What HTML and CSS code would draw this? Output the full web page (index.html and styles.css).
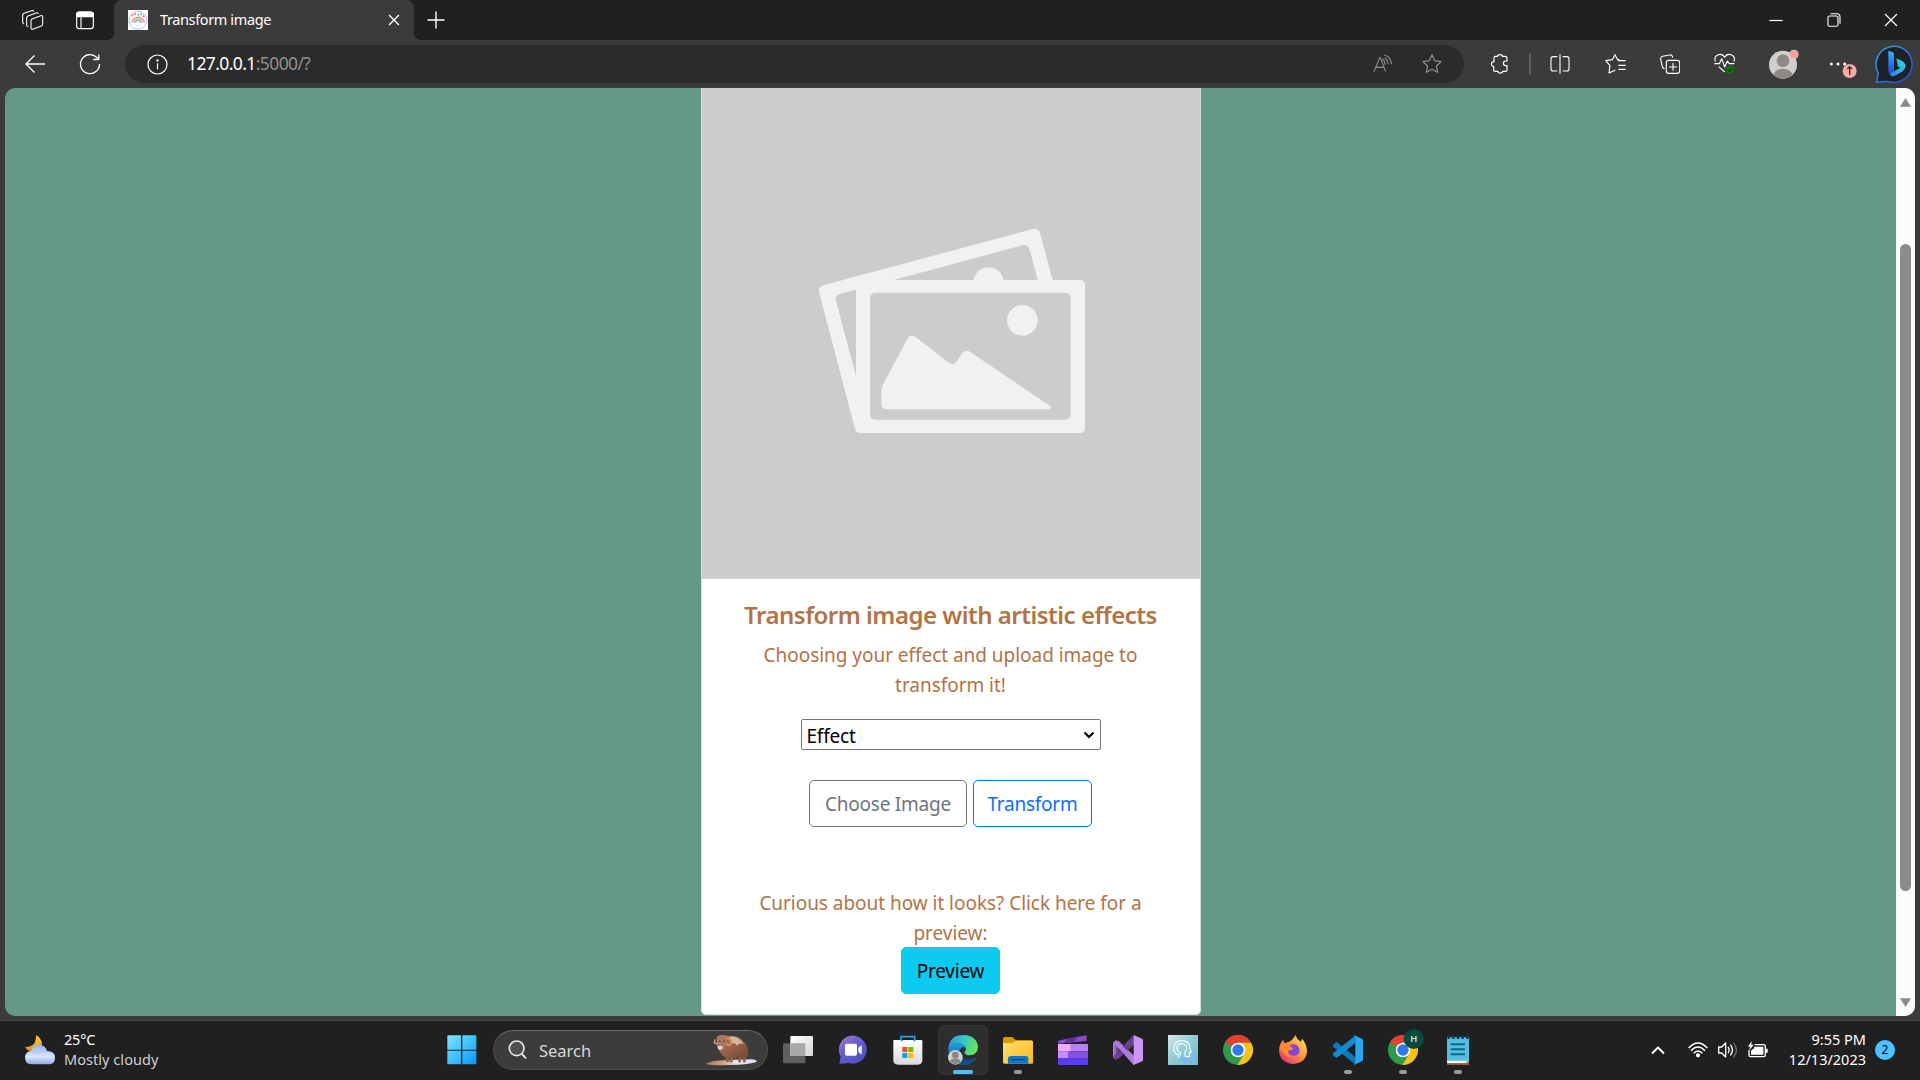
FILE: index.html
```html
<!DOCTYPE html>
<html lang="en">
<head>
<meta charset="utf-8">
<title>Transform image</title>
<link rel="stylesheet" href="styles.css">
</head>
<body>
<div class="desktop">
  <header class="tabstrip">
    <div class="strip-left">
      <svg class="ic over" width="21" height="20" viewBox="0 0 63 60" stroke-width="3.2"><path d="M30 27L56 17Q62 15 62 21V42Q62 46 58 48L34 57Q27 59 27 53V32Q27 28 30 27zM19 50Q14 49 14 44V24Q14 20 18 18L42 9Q48 7 49 12M6 42Q2 40 2 36V16Q2 12 6 10L28 2Q34 0 35 5"/></svg>
      <svg class="ic" width="20" height="20" viewBox="0 0 60 60" stroke-width="3.4"><rect x="5" y="6" width="50" height="50" rx="8"/><path d="M5 20V13q0-7 8-7h34q8 0 8 7v7z" fill="#fff"/><path d="M18 20v36"/></svg>
    </div>
    <div class="tab">
      <svg width="20" height="20" viewBox="0 0 60 60"><rect width="60" height="60" fill="#fff"/><circle cx="30" cy="31" r="27" fill="none" stroke="#9eacf3" stroke-width="2.5"/><g fill="none" stroke-width="3.500"><path d="M11 38a19 16 0 0 1 38 0" stroke="#f47a6d"/><path d="M15 38a15 12.500 0 0 1 30 0" stroke="#f8cf8c"/><path d="M19 38a11 9 0 0 1 22 0" stroke="#73c7a0"/><path d="M23 38a7 6 0 0 1 14 0" stroke="#8fb4f0"/><path d="M11 19l5-5" stroke="#f4a33d" stroke-width="5"/><path d="M19 13l5-2" stroke="#ef5b55" stroke-width="5"/><path d="M28 14h5" stroke="#3fb5c6" stroke-width="5"/><path d="M37 12l5 2" stroke="#5cba66" stroke-width="5"/><path d="M45 17l4 4" stroke="#ef5b55" stroke-width="5"/><path d="M22 46h16" stroke="#cfd6f5" stroke-width="2"/></g></svg>
      <span class="tab-title">Transform image</span>
      <svg class="ic" width="12" height="12" viewBox="0 0 12 12" stroke-width="1.4"><path d="M1 1l10 10M11 1L1 11"/></svg>
    </div>
    <svg class="ic newtab" width="18" height="18" viewBox="0 0 18 18" stroke-width="1.4"><path d="M9 .5v17M.5 9h17"/></svg>
    <div class="win-buttons">
      <svg class="ic" width="14" height="14" viewBox="0 0 14 14" stroke-width="1.2"><path d="M.5 7.500h13"/></svg>
      <svg class="ic" width="14" height="14" viewBox="0 0 14 14" stroke-width="1.1"><rect x="1" y="3" width="10" height="10.300" rx="1.500"/><path d="M3.500.8H10q3 0 3 3v7"/></svg>
      <svg class="ic" width="14" height="14" viewBox="0 0 14 14" stroke-width="1.2"><path d="M1 1l12 12M13 1L1 13"/></svg>
    </div>
  </header>

  <nav class="toolbar">
    <div class="nav-buttons">
      <svg class="ic" width="22" height="20" viewBox="0 0 22 20" stroke-width="1.3"><path d="M10.500 1.500L2 10l8.500 8.500M2 10h19"/></svg>
      <svg class="ic" width="22" height="22" viewBox="0 0 22 22" stroke-width="1.300"><path d="M20.500 11A9.500 9.500 0 1 1 17.600 4.300L19.500 6M19.800 1.500v5h-5.500"/></svg>
    </div>
    <div class="address">
      <svg class="ic" width="21" height="21" viewBox="0 0 21 21" stroke-width="1.2"><circle cx="10.500" cy="10.500" r="9.500"/><path d="M10.500 9.300v6"/><circle cx="10.500" cy="6.500" r=".6" fill="#fff"/></svg>
      <span class="url">127.0.0.1<span class="url-dim">:5000/?</span></span>
      <svg class="ic dim" width="20" height="20" viewBox="0 0 60 60" stroke-width="3.300"><path d="M3 53L20 11h2l16 42M9 40h23M35 12q10 5 10 19M34 3q20 5 21 27M27 15q8 3 9 17" /></svg>
      <svg class="ic dim" width="20" height="20" viewBox="0 0 20 20" stroke-width="1.200"><path d="M10 .9l2.800 5.800 6.300.9-4.600 4.400 1.100 6.300L10 15.300l-5.600 3 1.100-6.300L.9 7.600l6.300-.9z"/></svg>
    </div>
    <div class="tools">
      <svg class="ic" width="20" height="20" viewBox="0 0 60 60" stroke-width="3.500"><path d="M12 11q0-4 4-4h7c0-7 14-7 14 0h8q6 0 6 5v9h-4c-9 0-9 14 0 14h4v12q0 5-5 5h-8c0 7-14 7-14 0h-8q-5 0-5-4V37C2 37 2 23 12 23z"/></svg>
      <span class="divider"></span>
      <svg class="ic" width="20" height="20" viewBox="0 0 60 60" stroke-width="3.300"><path d="M22 8H10q-7 0-7 7v29q0 7 7 7h12M38 8h12q7 0 7 7v29q0 7-7 7H38M30 1v58"/></svg>
      <svg class="ic" width="21" height="20" viewBox="0 0 63 60" stroke-width="3.500"><path d="M43 17l-5 0-8-15-8 15-20 3 13 15-3 22 15-7 4-2M39 20h23M40 34h22M40 46h22"/></svg>
      <svg class="ic" width="20" height="20" viewBox="0 0 60 60" stroke-width="3.300"><rect x="19" y="19" width="40" height="39" rx="7"/><path d="M39 27v23M27 39h24M38 11q-1-10-9-8L8 7Q1 9 2 16l5 22q1 5 7 6"/></svg>
      <svg class="ic over" width="22" height="22" viewBox="0 0 66 66" stroke-width="3.400"><path d="M4 26C-3 4 24-3 32 13 40-3 67 4 60 26M1 32h15l7-15 9 25 8-18 6 8h15M14 41l18 16"/><circle cx="48" cy="50" r="13" fill="#12700f" stroke="none"/><path d="M42 51l4 4 8-9" stroke="#063b05"/></svg>
      <svg width="32" height="32" viewBox="0 0 96 96"><defs><clipPath id="av"><circle cx="45" cy="50" r="42"/></clipPath></defs><circle cx="45" cy="50" r="42" fill="#d1cfcc"/><g clip-path="url(#av)" fill="#8c8986"><circle cx="45" cy="38" r="19"/><ellipse cx="45" cy="83" rx="29" ry="21"/></g><circle cx="78" cy="19" r="14" fill="#d1cfcc"/><circle cx="78" cy="19" r="11.500" fill="#fa9e98"/></svg>
      <svg width="28" height="28" viewBox="0 0 84 84"><g fill="#fff"><circle cx="7" cy="42" r="4.500"/><circle cx="27" cy="42" r="4.500"/><circle cx="47" cy="42" r="4.500"/></g><circle cx="62" cy="63" r="21" fill="#f7aaa5"/><path d="M62 75V51M55 57l7-7 7 7" stroke="#333" stroke-width="4" fill="none"/></svg>
      <svg width="40" height="40" viewBox="0 0 120 120"><defs><linearGradient id="bg1" x1="0" x2="1" y1="0" y2="1"><stop stop-color="#27b5ee"/><stop offset=".5" stop-color="#2b74ee"/><stop offset="1" stop-color="#1d4fd0"/></linearGradient><linearGradient id="bg2" x1="0" x2="0" y1="0" y2="1"><stop stop-color="#3ab4fb"/><stop offset="1" stop-color="#1c4bd8"/></linearGradient><linearGradient id="bg3" x1="1" x2="0" y1="0" y2="1"><stop stop-color="#2ce6d6"/><stop offset="1" stop-color="#2f7bf2"/></linearGradient></defs><path d="M5 115L10 87A54 54 0 1 1 43 113Q28 111 5 115z" fill="#1e2228" stroke="url(#bg1)" stroke-width="4.500" stroke-linejoin="round"/><path d="M40 20l12 4q5 2 5 7v53L44 89q-4-3-4-8z" fill="url(#bg2)"/><path d="M64 43l16 7q12 6 11 19-2 8-10 14L58 96q-8 4-14-6 2-2 13-8l19-11-7-3z" fill="url(#bg3)"/></svg>
    </div>
  </nav>

  <main class="frame">
    <div class="viewport">
      <div class="page">
        <section class="card">
          <svg class="art" viewBox="702 88 498 491"><g transform="translate(790 210) scale(.33333)">
            <path fill-rule="evenodd" fill="#f1f1f1" d="M87 245Q85 230 100 226L728 57Q745 54 750 69L788 210H870Q885 210 885 225V655Q885 669 870 669H212Q199 669 195 657zM311 210H551A45 45 0 0 1 640 210H743L719 119Q715 103 700 105zM198 498V239L151 251Q134 255 138 272zM258 248Q240 248 240 265V612Q240 629 257 629H826Q842 629 842 612V265Q842 248 826 248z"/>
            <circle cx="697" cy="331" r="46" fill="#f1f1f1"/>
            <path fill="#f1f1f1" d="M274 545Q274 531 280 521L352 387Q361 371 376 380L474 457Q490 470 501 454L515 431Q526 417 541 426L779 587Q788 598 775 598H292Q274 598 274 580z"/>
          </g></svg>
          <div class="card-body">
            <h5 class="card-title">Transform image with artistic effects</h5>
            <p class="card-text lead-text">Choosing your effect and upload image to<br>transform it!</p>
            <div class="select" role="combobox"><span>Effect</span><svg width="12" height="8" viewBox="0 0 12 8"><path d="M1.500 1.500L6 6l4.500-4.500" fill="none" stroke="#000" stroke-width="2.100"/></svg></div>
            <div class="actions"><button class="btn btn-outline choose">Choose Image</button><button class="btn btn-primary transform">Transform</button></div>
            <p class="card-text preview-text">Curious about how it looks? Click here for a<br>preview:</p>
            <button class="btn btn-info">Preview</button>
          </div>
        </section>
      </div>
      <div class="scrollbar">
        <svg width="11" height="9" viewBox="0 0 11 9"><path d="M5.500 0.500L10.600 8.500H.4z" fill="#8b8b8b" stroke="#8b8b8b" stroke-width=".6" stroke-linejoin="round"/></svg>
        <span class="thumb"></span>
        <svg width="11" height="9" viewBox="0 0 11 9"><path d="M5.500 8.500L10.600.5H.4z" fill="#8b8b8b" stroke="#8b8b8b" stroke-width=".6" stroke-linejoin="round"/></svg>
      </div>
    </div>
  </main>

  <footer class="taskbar">
    <div class="weather">
      <svg width="30" height="30" viewBox="0 0 90 90"><defs><linearGradient id="moon" x1="0" x2="0" y1="0" y2="1"><stop stop-color="#f7c948"/><stop offset="1" stop-color="#f08a1c"/></linearGradient><linearGradient id="cloud" x1="0" x2="0" y1="0" y2="1"><stop stop-color="#8fb6f2"/><stop offset=".6" stop-color="#d9e5fb"/><stop offset="1" stop-color="#8eabe9"/></linearGradient></defs><path d="M33 1Q48 8 51 25 51 46 30 50 10 52 0 36 20 36 29 24 34 14 33 1z" fill="url(#moon)"/><path d="M20 88Q0 88 0 67 1 49 19 47 24 30 43 30 61 30 66 48 90 49 90 68 90 88 70 88z" fill="url(#cloud)"/><path d="M20 50q14-2 21 9M42 53q10-8 24-4" stroke="#a9c3f2" stroke-width="3" fill="none"/></svg>
      <div class="weather-text"><span class="temp">25°C</span><span class="cond">Mostly cloudy</span></div>
    </div>
    <div class="start">
      <svg width="30" height="30" viewBox="0 0 90 90"><defs><linearGradient id="win" x1="0" x2="1" y1="0" y2="1"><stop stop-color="#86e0fd"/><stop offset=".5" stop-color="#3fc4fb"/><stop offset="1" stop-color="#0a92f8"/></linearGradient></defs><path fill="url(#win)" d="M4 1h38v43H1V4q0-3 3-3zM46 1h39q3 0 3 3v40H46zM1 47h41v41H4q-3 0-3-3zM46 47h42v38q0 3-3 3H46z"/></svg>
    </div>
    <div class="search">
      <svg width="20" height="20" viewBox="0 0 60 60"><circle cx="26" cy="25" r="22" fill="#4b4f52" stroke="#e6e6e6" stroke-width="5"/><path d="M41 41l13 14" stroke="#e6e6e6" stroke-width="6"/></svg>
      <span class="search-label">Search</span>
      <svg width="52" height="32" viewBox="0 0 156 96"><defs><linearGradient id="ox" x1="0" x2="1" y1="0" y2="1"><stop stop-color="#b9856a"/><stop offset=".5" stop-color="#9a6248"/><stop offset="1" stop-color="#714231"/></linearGradient><linearGradient id="snow" x1="0" x2="1" y1="0" y2="0"><stop stop-color="#a76f50"/><stop offset=".4" stop-color="#dcab8a"/><stop offset=".6" stop-color="#e9e2ee"/><stop offset="1" stop-color="#dcdcf2"/></linearGradient></defs><path d="M1 89l24-8 55-4 60-1q16 1 15 8-30 9-79 9-61 2-75-4z" fill="url(#snow)"/><path d="M61 68h10l2 16H63zM76 68h8l-2 17h-8zM99 68h9v17h-8zM114 66h8v19h-8z" fill="#8a634d"/><path d="M35 8Q48 0 60 4 70 7 76 6 100 4 112 18 131 34 130 65L124 72 117 68 109 75 99 68 91 75 83 68 69 75Q48 66 41 46L36 40z" fill="url(#ox)"/><path d="M74 8Q102 5 116 31 103 25 96 35 88 21 78 31z" fill="#d7b5a0"/><path d="M36 11q13-8 28 0l-4 27q-8 9-18 4z" fill="#a77a66"/><path d="M30 18q-6 12 7 11M67 13q17 1 10 17-7 7-13-1" fill="none" stroke="#df965c" stroke-width="5" stroke-linecap="round"/><ellipse cx="46" cy="41" rx="8" ry="6" fill="#ead2c4"/><path d="M43 22h3M55 22h3" stroke="#241713" stroke-width="4"/></svg>
    </div>
    <div class="apps">
      <div class="app"><svg width="30" height="30" viewBox="0 0 90 90"><defs><linearGradient id="tv" x1="0" x2="1" y1="0" y2="1"><stop stop-color="#fff"/><stop offset="1" stop-color="#d5d5d5"/></linearGradient></defs><rect y="25" width="67" height="60" rx="4" fill="#5f5f5f"/><rect x="22" y="3" width="68" height="60" rx="3" fill="url(#tv)"/><path d="M22 25h45v38H25q-3 0-3-3z" fill="#a9a9a9"/></svg></div>
      <div class="app"><svg width="30" height="30" viewBox="0 0 90 90"><defs><linearGradient id="chat" x1="0" x2=".7" y1="0" y2="1"><stop stop-color="#aa7abf"/><stop offset=".5" stop-color="#6260cf"/><stop offset="1" stop-color="#4e50be"/></linearGradient></defs><path d="M4 86L8 65A42 42 0 1 1 32 84Q20 86 4 86z" fill="url(#chat)"/><rect x="21" y="26" width="36" height="36" rx="5" fill="#fff"/><path d="M61 39l10-9v29l-10-9z" fill="#fff"/></svg></div>
      <div class="app"><svg width="30" height="30" viewBox="0 0 90 90"><defs><linearGradient id="store" x1="0" x2="0" y1="0" y2="1"><stop stop-color="#fff"/><stop offset="1" stop-color="#d9d9d9"/></linearGradient></defs><path d="M24 21V5h41v16" fill="none" stroke="#1aa5ed" stroke-width="5"/><path d="M4 15h80q4 0 4 4v56q0 14-14 14H15Q1 89 1 76V19q0-4 3-4z" fill="url(#store)"/><path d="M24 15h5v4h-5zM62 15h5v4h-5z" fill="#1679bd"/><path d="M28 36h15v15H28z" fill="#f25022"/><path d="M46 36h15v15H46z" fill="#7fba00"/><path d="M28 54h15v15H28z" fill="#00a4ef"/><path d="M46 54h15v15H46z" fill="#ffb900"/></svg></div>
      <div class="app active"><svg width="30" height="30" viewBox="0 0 90 90"><defs><linearGradient id="e1" x1="0" x2="1" y1="0" y2=".3"><stop stop-color="#258ed5"/><stop offset=".5" stop-color="#35c4d2"/><stop offset="1" stop-color="#64e35c"/></linearGradient><linearGradient id="e2" x1="0" x2="0" y1="0" y2="1"><stop stop-color="#1aa0e0"/><stop offset="1" stop-color="#0c5aa8"/></linearGradient></defs><path d="M1 40Q5 0 46 0 88 2 90 37 88 60 65 61 52 60 49 53 54 46 54 40 48 25 29 25 11 27 1 40z" fill="url(#e1)"/><path d="M1 40Q13 24 31 25 49 27 54 40 42 31 36 44 31 57 46 70 63 80 82 68 86 67 83 71 68 91 43 90 2 87 1 40z" fill="url(#e2)"/><path d="M37 44q-6 13 9 26 17 10 36-2Q66 93 41 88q-22-12-15-36z" fill="#0c4d96"/><circle cx="22" cy="67" r="22" fill="#d2d0ce"/><circle cx="22" cy="60" r="10" fill="#8b8884"/><path d="M6 81q2-11 16-11t16 11q-16 13-32 0z" fill="#8b8884"/></svg></div>
      <div class="app open"><svg width="30" height="30" viewBox="0 0 90 90"><defs><linearGradient id="fold" x1="0" x2="1" y1="0" y2="1"><stop stop-color="#ffdf73"/><stop offset="1" stop-color="#fbb916"/></linearGradient></defs><path d="M0 12q0-6 5-6h23l11 10h48v25H0z" fill="#d99a08"/><path d="M0 24h29l10-7h48q3 0 3 3v63q0 3-3 3H4q-4 0-4-4z" fill="url(#fold)"/><path d="M15 86V71q0-8 8-8h45q8 0 8 8v15z" fill="#0b78cb"/><path d="M28 74h35" stroke="#063f78" stroke-width="4" stroke-linecap="round"/></svg></div>
      <div class="app"><svg width="30" height="30" viewBox="0 0 90 90"><path d="M0 23Q-1 17 6 16L84 1q2 0 2 3v14L1 26z" fill="#8c49c9"/><path d="M27 12l31-6-8 15-31 3z" fill="#6032a3"/><path d="M3 27h87v22H0V30q0-3 3-3z" fill="#b681f5"/><path d="M0 27h37v22H0z" fill="#efaaff"/><path d="M0 49h30v21H0z" fill="#c78afc"/><path d="M30 49h60v21H30z" fill="#8350e4"/><path d="M0 70h90v16q0 4-4 4H4q-4 0-4-4z" fill="#5b3df0"/></svg></div>
      <div class="app"><svg width="30" height="30" viewBox="0 0 90 90"><path d="M0 25l8-8 9 5v46l-9 5-8-7z" fill="#714690"/><path d="M3 20l5-4 9 2 51 49-6 23L8 30v44l-8-8V25z" fill="#ac76d7"/><path d="M0 65l62-65 3 27-49 44-8 3z" fill="#69428e"/><path d="M9 17l55 48v25L8 29z" fill="#af7bdc"/><path d="M62 0l25 11q3 2 3 5v58q0 3-3 5L62 90z" fill="#ca95f5"/></svg></div>
      <div class="app"><svg width="30" height="30" viewBox="0 0 90 90"><defs><linearGradient id="head" x1="0" x2="1" y1="0" y2="1"><stop stop-color="#d5e9e7"/><stop offset=".5" stop-color="#8ecbd1"/><stop offset="1" stop-color="#75b4e2"/></linearGradient></defs><path d="M0 0h90v90H0z" fill="url(#head)"/><path d="M32 68l31-3 27 25H53z" fill="#7abbe9"/><g fill="none" stroke="#eefafd" stroke-width="4"><path d="M32 69V60Q17 55 17 39 20 16 43 17 67 19 65 41l5 10-6 1v13H54"/><path d="M37 61V53Q25 47 27 37 31 25 43 26 58 28 56 43L51 51v14"/></g></svg></div>
      <div class="app"><svg width="30" height="30" viewBox="0 0 90 90"><circle cx="45" cy="45" r="45" fill="#2d9b4b"/><path d="M45 45L6 22A45 45 0 0 1 84 23H45z" fill="#e4402f"/><path d="M45 23h39A45 45 0 0 1 43 90L64 56z" fill="#fbc116"/><circle cx="45" cy="45" r="22" fill="#fff"/><circle cx="45" cy="45" r="17" fill="#3079ed"/></svg></div>
      <div class="app"><svg width="30" height="30" viewBox="0 0 90 90"><defs><linearGradient id="ff" x1="1" x2="0" y1="0" y2="1"><stop stop-color="#fff34f"/><stop offset=".45" stop-color="#ff9640"/><stop offset="1" stop-color="#e31587"/></linearGradient></defs><path d="M53 0Q57 15 69 20L72 11Q86 25 87 48 85 84 45 87 4 83 3 46 4 24 16 14L19 25 33 20Q44 16 53 0z" fill="url(#ff)"/><path d="M28 39Q37 24 54 29 67 37 64 53 55 66 40 61 29 55 30 46q11 1 16-5-10-2-18-2z" fill="#8144d7"/><path d="M5 42Q4 26 18 23l16 8 13 10-16 4-1 8Q33 63 48 64 27 72 15 53z" fill="#ff8731"/></svg></div>
      <div class="app open"><svg width="30" height="30" viewBox="0 0 90 90"><path d="M2 27l9-6 57 46v22L1 36q-2-4 1-9z" fill="#0879bd"/><path d="M2 63l9 6 57-46V1L1 54q-2 4 1 9z" fill="#1289d1"/><path d="M62 0l26 12q2 1 2 4v58q0 3-2 4L62 90q5-4 5-9V9q0-5-5-9z" fill="#29a8ee"/></svg></div>
      <div class="app open"><svg class="over" width="30" height="30" viewBox="0 0 90 90"><circle cx="45" cy="45" r="45" fill="#2d9b4b"/><path d="M45 45L6 22A45 45 0 0 1 84 23H45z" fill="#e4402f"/><path d="M45 23h39A45 45 0 0 1 43 90L64 56z" fill="#fbc116"/><circle cx="45" cy="45" r="22" fill="#fff"/><circle cx="45" cy="45" r="17" fill="#3079ed"/><circle cx="77" cy="12" r="30" fill="#064b40"/><text class="profile-letter" x="77" y="22" text-anchor="middle">H</text></svg></div>
      <div class="app open"><svg width="30" height="30" viewBox="0 0 90 90"><path d="M12 78h66v12H12z" fill="#a5581f"/><path d="M12 7h66v72l-5 6H12z" fill="#55bddd"/><path d="M12 77h62l-6 7H12z" fill="#f2f5f5"/><g stroke="#093e57" stroke-width="7"><path d="M17 1v11M31 1v11M45 1v11M59 1v11M73 1v11"/></g><path d="M23 28h43M23 43h43M23 58h43" stroke="#0a6a8a" stroke-width="6"/></svg></div>
    </div>
    <div class="tray">
      <svg class="ic" width="14" height="9" viewBox="0 0 14 9" stroke-width="1.800"><path d="M1 7.500l6-6 6 6"/></svg>
      <svg class="ic" width="20" height="16" viewBox="0 0 60 48" stroke-width="4.500"><path d="M2 18Q30-12 58 18M9 26q21-22 42 0M17 34q13-14 26 0"/><circle cx="30" cy="40" r="4" fill="#fff"/></svg>
      <svg class="ic" width="20" height="18" viewBox="0 0 60 54" stroke-width="4"><path d="M2 18h9L23 6v42L11 36H2z"/><path d="M30 18q7 9 0 18M37 11q13 16 0 32"/><path d="M46 5q19 22 0 44" stroke="#6b6b6b"/></svg>
      <svg class="ic" width="20" height="18" viewBox="0 0 60 54" stroke-width="4"><path d="M20 11h27q5 0 5 5v26q0 5-5 5H8q-5 0-5-5V27"/><path d="M18 17h28v24H9V29l10-8z" fill="#fff" stroke="none"/><path d="M54 23h5v12h-5z" fill="#fff" stroke="none"/><path d="M11 0L0 17h7L3 29 17 11h-7z" fill="#fff" stroke="none"/></svg>
      <div class="clock"><span class="time">9:55 PM</span><span class="date">12/13/2023</span></div>
      <span class="badge">2</span>
    </div>
  </footer>
</div>
</body>
</html>
```
FILE: styles.css
```css
* { box-sizing: border-box; }
body { margin: 0; font-family: "Noto Sans", "Open Sans", sans-serif; background: #202020; overflow: hidden; }
svg { display: block; flex: none; }
.ic { fill: none; stroke: #fff; stroke-linejoin: round; }
.dim { stroke: #929292; }
.over { overflow: visible; }
.desktop { width: 1920px; height: 1080px; display: flex; flex-direction: column; }

.tabstrip { height: 40px; display: flex; align-items: center; background: #202020; }
.strip-left { width: 114px; display: flex; align-items: center; gap: 32px; padding-left: 22px; height: 40px; }
.tab { position: relative; width: 300px; height: 40px; display: flex; align-items: center; padding: 0 14px; gap: 12px; background: #3b3b3b; border-radius: 8px 8px 0 0; }
.tab::before, .tab::after { content: ""; position: absolute; bottom: 0; width: 6px; height: 6px; }
.tab::before { left: -6px; background: radial-gradient(circle at 0 0, transparent 5.500px, #3b3b3b 6px); }
.tab::after { right: -6px; background: radial-gradient(circle at 100% 0, transparent 5.500px, #3b3b3b 6px); }
.tab-title { flex: 1; color: #fff; font-size: 14.500px; letter-spacing: -.38px; padding-bottom: 2px; }
.newtab { margin-left: 13px; }
.win-buttons { margin-left: auto; display: flex; gap: 43.500px; padding-right: 22px; }

.toolbar { height: 48px; display: flex; align-items: center; background: #3b3b3b; }
.nav-buttons { width: 125px; display: flex; align-items: center; gap: 33px; padding-left: 24px; }
.address { width: 1339px; height: 38px; border-radius: 19px; background: #2b2b2b; display: flex; align-items: center; padding: 0 22px; }
.url { flex: 1; margin-left: 19px; padding-bottom: 2px; color: #fff; font-size: 17.500px; letter-spacing: -.6px; }
.url-dim { color: #8f8f8f; }
.address .dim + .dim { margin-left: 29px; }
.tools { display: grid; grid-template-columns: 56px 3px 57px 55px 54px 55px 63px 55px 50px; margin-left: 8px; align-items: center; justify-items: center; }
.divider { width: 2px; height: 20px; background: #5e5e5e; }

.frame { height: 933px; padding: 0 5px 5px; background: #3b3b3b; border-bottom: 1px solid #444; }
.viewport { height: 928px; display: flex; border-radius: 10px; overflow: hidden; background: #639986; }
.page { width: 1891px; display: flex; justify-content: center; align-items: flex-start; }
.card { width: 500px; height: 927px; background: #fff; border: 1px solid #d5dfdc; border-top: 0; border-radius: 0 0 5px 5px; }
.art { width: 498px; height: 491px; background: #ccc; }
.card-body { display: flex; flex-direction: column; align-items: center; padding-top: 21px; color: #b27346; }
.card-title { margin: 0 0 10px; font-size: 24px; line-height: 30px; font-weight: 600; letter-spacing: -.5px; white-space: nowrap; }
.card-text { margin: 0; font-size: 19px; line-height: 30px; letter-spacing: -.04px; text-align: center; white-space: nowrap; }
.select { width: 300px; height: 31px; margin-top: 19px; border: 1px solid #767676; border-radius: 2px; display: flex; align-items: center; justify-content: space-between; padding: 2px 5px 0 5px; font-size: 19px; line-height: 28px; letter-spacing: -.2px; color: #000; }
.select svg { margin-top: -2px; }
.actions { display: flex; gap: 6px; margin-top: 30px; }
.btn { height: 47px; border: 1px solid; border-radius: 5px; padding: 0; background: transparent; font: 19px/30px "Noto Sans", sans-serif; letter-spacing: -.25px; white-space: nowrap; }
.choose { width: 158px; color: #6c757d; }
.transform { width: 119px; color: #0d6efd; }
.preview-text { margin-top: 61px; }
.btn-info { width: 99px; margin-top: -1px; color: #000; background: #0dcaf0; border-color: #0dcaf0; }

.scrollbar { width: 19px; background: #fcfcfc; display: flex; flex-direction: column; align-items: center; padding: 10px 0 9px; }
.thumb { width: 11px; height: 647px; border-radius: 6px; background: #8b8b8b; margin: 137px 0 auto; }

.taskbar { height: 59px; display: flex; align-items: center; padding-bottom: 1px; background: #202020; color: #fff; }
.weather { width: 434px; display: flex; align-items: center; padding-left: 25px; gap: 9px; font-size: 14.500px; line-height: 20px; }
.weather-text { display: flex; flex-direction: column; padding-bottom: 3px; }
.temp { letter-spacing: -.2px; }
.cond { color: #cfcfcf; letter-spacing: .05px; }
.start { width: 59px; padding-left: 13px; }
.search { width: 275px; height: 40px; border-radius: 20px; background: #3c3c3c; border: 1px solid #4d4d4d; border-top-color: #6a6a6a; display: flex; align-items: center; padding: 0 10px 0 14px; gap: 11px; }
.search-label { flex: 1; font-size: 16.500px; color: #d8d8d8; }
.apps { display: flex; margin-left: 2px; }
.app { position: relative; width: 55px; height: 50px; display: grid; place-items: center; }
.active { width: 50px; margin: 0 2px 0 3px; background: #2e2e2e; border: 1px solid #363636; border-radius: 6px; }
.open::after, .active::after { content: ""; position: absolute; bottom: 1px; left: 50%; width: 8px; height: 4px; margin-left: -4px; border-radius: 2px; background: #9a9a9a; }
.active::after { width: 20px; margin-left: -10px; bottom: 0; background: #4cc2ff; }
.profile-letter { font: 600 28px "Noto Sans", sans-serif; fill: #d5e3df; }
.tray { margin-left: auto; padding-right: 25px; display: flex; align-items: center; }
.tray > svg + svg { margin-left: 23px; }
.tray > svg + svg + svg { margin-left: 10px; }
.tray .clock { width: 88px; margin-left: 10px; padding-bottom: 3px; display: flex; flex-direction: column; align-items: flex-end; font-size: 14.500px; line-height: 20px; letter-spacing: 0; }
.badge { width: 20px; height: 20px; margin-left: 9px; border-radius: 50%; background: #4cc2ff; color: #111; font-size: 12px; line-height: 20px; text-align: center; }
```
